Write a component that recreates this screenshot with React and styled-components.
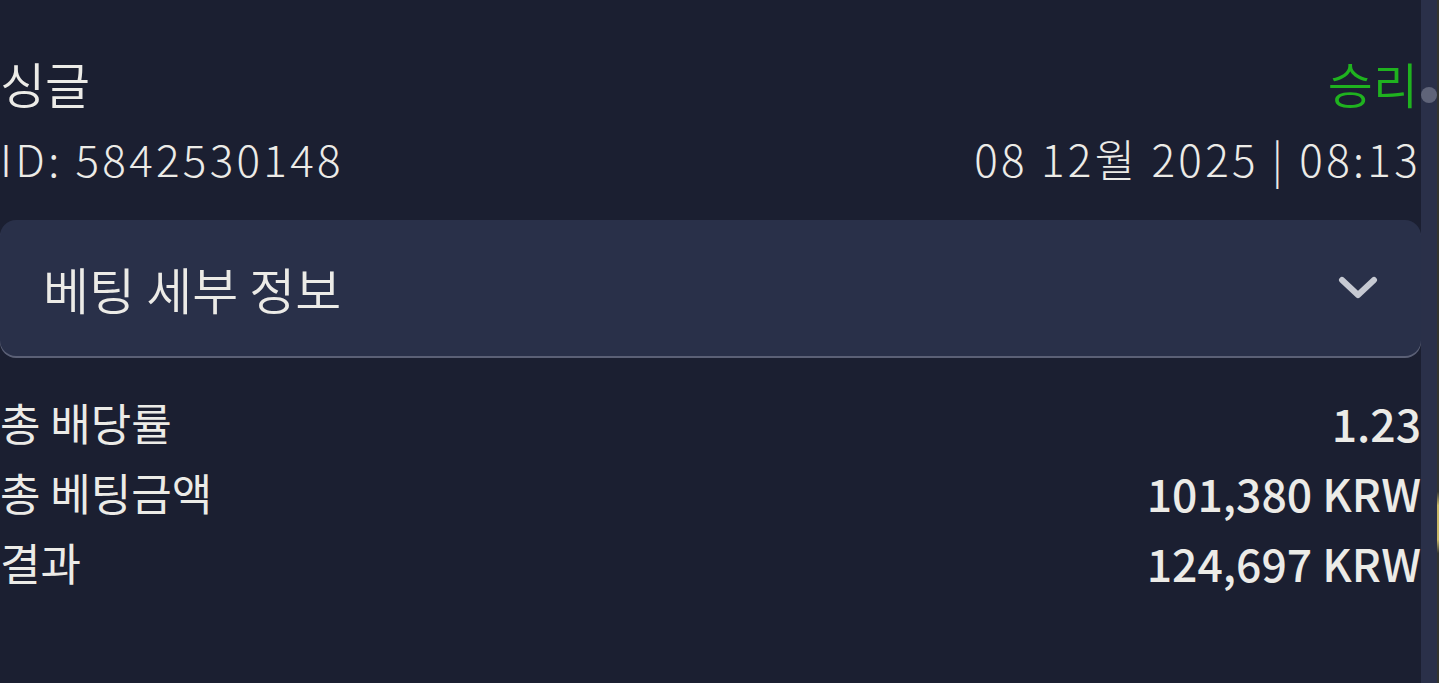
import React from "react";
import styled, { createGlobalStyle } from "styled-components";

const GlobalStyle = createGlobalStyle`
  html, body {
    margin: 0;
    padding: 0;
    background: #1b1f31;
    overflow: hidden;
  }
  body {
    font-family: "Noto Sans CJK KR", "Noto Sans", sans-serif;
    color: #ecebe7;
  }
`;

export default function App() {
  return (
    <>
      <GlobalStyle />
      <Page>
        <Main>
          <Header>
            <TitleRow>
              <Title>싱글</Title>
              <Status>승리</Status>
            </TitleRow>
            <MetaRow>
              <Meta>ID: 5842530148</Meta>
              <Meta>08 12월 2025 | 08:13</Meta>
            </MetaRow>
          </Header>
          <Details>
            <DetailsTitle>베팅 세부 정보</DetailsTitle>
            <Chevron viewBox="0 0 40 24">
              <path d="M4 4 L20 19 L36 4" />
            </Chevron>
          </Details>
          <Summary>
            <SummaryRow>
              <Label>총 배당률</Label>
              <Value>1.23</Value>
            </SummaryRow>
            <SummaryRow>
              <Label>총 베팅금액</Label>
              <Value>101,380 KRW</Value>
            </SummaryRow>
            <SummaryRow>
              <Label>결과</Label>
              <Value>124,697 KRW</Value>
            </SummaryRow>
          </Summary>
        </Main>
        <Track>
          <Thumb />
        </Track>
        <Edge />
      </Page>
    </>
  );
}

const Page = styled.div`
  display: flex;
  height: 683px;
  width: 1439px;
`;

const Main = styled.div`
  flex: 1;
  min-width: 0;
  display: flex;
  flex-direction: column;
`;

const Header = styled.div`
  padding-top: 44px;
  display: flex;
  flex-direction: column;
`;

const TitleRow = styled.div`
  display: flex;
  justify-content: space-between;
  align-items: center;
  height: 76px;
`;

const Title = styled.div`
  font-size: 49px;
  font-weight: 350;
`;

const Status = styled.div`
  font-size: 49px;
  font-weight: 350;
  color: #1fb21f;
  margin-right: 3px;
`;

const MetaRow = styled.div`
  display: flex;
  justify-content: space-between;
  align-items: center;
  height: 76px;
`;

const Meta = styled.div`
  font-size: 44px;
  font-weight: 300;
  letter-spacing: 3.3px;
`;

const Details = styled.div`
  margin-top: 24px;
  height: 136px;
  background: #293049;
  border-radius: 16px;
  box-shadow: 0 2px 0 #5b6076;
  display: flex;
  align-items: center;
  justify-content: space-between;
  padding: 0 43px 0 43px;
`;

const DetailsTitle = styled.div`
  font-size: 50px;
  font-weight: 350;
`;

const Chevron = styled.svg`
  width: 40px;
  height: 24px;
  fill: none;
  stroke: #c6c9d2;
  stroke-width: 6;
  stroke-linecap: round;
  stroke-linejoin: round;
`;

const Summary = styled.div`
  margin-top: 31px;
  display: flex;
  flex-direction: column;
`;

const SummaryRow = styled.div`
  display: flex;
  justify-content: space-between;
  align-items: center;
  height: 70px;
`;

const Label = styled.div`
  font-size: 44px;
  font-weight: 400;
`;

const Value = styled.div`
  font-size: 44.5px;
  font-weight: 500;
`;

const Track = styled.div`
  width: 16px;
  background: #2a3049;
  padding-top: 87px;
  display: flex;
  justify-content: center;
  align-items: flex-start;
`;

const Thumb = styled.div`
  width: 16px;
  height: 16px;
  border-radius: 50%;
  background: #5f6479;
`;

const Edge = styled.div`
  width: 2px;
  background: linear-gradient(
    to bottom,
    #33342f 0%,
    #33342f 72%,
    #c9b867 74%,
    #c9b867 79%,
    #33342f 81%
  );
`;
